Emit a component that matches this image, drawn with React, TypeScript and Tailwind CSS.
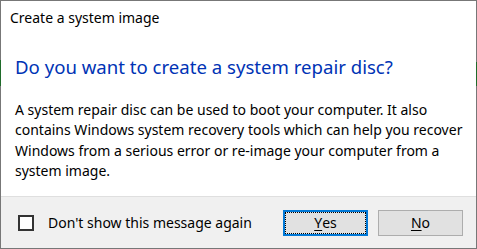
import React from "react";

const font = { fontFamily: '"Noto Sans", "Open Sans", sans-serif' };

export default function App() {
  return (
    <div className="w-[477px] h-[249px] flex flex-col bg-white" style={font}>
      <div className="h-px bg-[#777777] w-full" />
      <div className="flex flex-1">
        <div className="w-px flex flex-col">
          <div className="h-[59px] bg-[#777777]" />
          <div className="h-[26px] bg-[#1f6b2a]" />
          <div className="flex-1 bg-[#777777]" />
        </div>
        <div className="flex-1 flex flex-col">
          <div className="h-[195px] bg-white flex flex-col">
            <div className="pl-[9px] pt-[7px] h-[20px] text-[14px] leading-[20px] text-black box-content">
              Create a system image
            </div>
            <div className="pl-[14px] mt-[25px] text-[18.6px] leading-[28px] text-[#0033b5]">
              Do you want to create a system repair disc?
            </div>
            <div className="pl-[14px] pr-[2px] mt-[19px] text-[14px] leading-[20.4px] text-black">
              A system repair disc can be used to boot your computer. It also contains Windows system recovery tools which can help you recover Windows from a serious error or re-image your computer from a system image.
            </div>
          </div>
          <div className="h-px bg-[#dfdfdf]" />
          <div className="h-[51px] bg-[#f0f0f0] flex items-center pl-[17px] pr-[13px]">
            <div className="w-4 h-4 border-2 border-[#333333] bg-white" />
            <div className="ml-[14px] text-[14px] leading-[20px] text-black">
              Don't show this message again
            </div>
            <div className="flex-1" />
            <button className="w-[85px] h-[26px] border-2 border-[#0078d7] bg-[#e1e1e1] p-0 flex">
              <div className="flex-1 border border-dotted border-black flex items-center justify-center text-[14px] leading-[20px] text-black">
                <span className="underline underline-offset-2 decoration-1">Y</span>es
              </div>
            </button>
            <button className="ml-[10px] w-[85px] h-[26px] border border-[#adadad] bg-[#e1e1e1] flex items-center justify-center text-[14px] leading-[20px] text-black">
              <span className="underline underline-offset-2 decoration-1">N</span>o
            </button>
          </div>
        </div>
        <div className="w-px flex flex-col">
          <div className="h-[61px] bg-[#777777]" />
          <div className="h-[24px] bg-[#1f6b2a]" />
          <div className="flex-1 bg-[#777777]" />
        </div>
      </div>
      <div className="h-px bg-[#777777] w-full" />
    </div>
  );
}
